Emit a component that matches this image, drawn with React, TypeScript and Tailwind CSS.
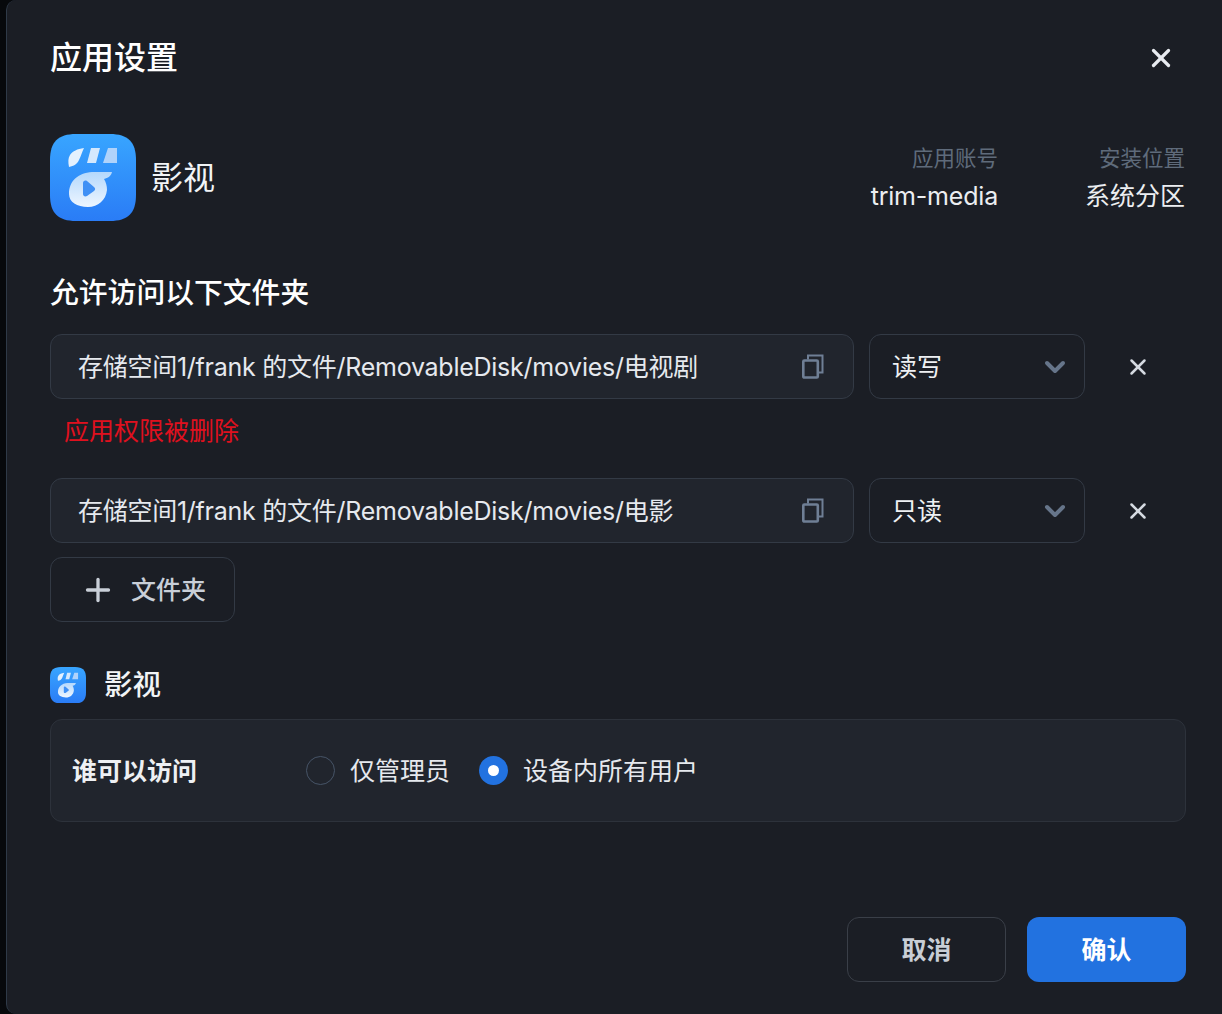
import { ChevronDownIcon, PlusIcon, XIcon } from 'lucide-react';

const FONT = "font-['Inter','Noto_Sans_CJK_SC',sans-serif]";

const FOLDERS = [
	{ path: '存储空间1/frank 的文件/RemovableDisk/movies/电视剧', mode: '读写', error: '应用权限被删除' },
	{ path: '存储空间1/frank 的文件/RemovableDisk/movies/电影', mode: '只读' }
];

function AppIcon({ size, id }: { size: number; id: string }) {
	return (
		<svg width={size} height={(size * 87) / 86} viewBox="0 0 86 87" className="shrink-0">
			<defs>
				<linearGradient id={`${id}-bg`} x1="0" y1="0" x2="0" y2="1">
					<stop offset="0" stopColor="#38a5ff" />
					<stop offset="1" stopColor="#2a7cf6" />
				</linearGradient>
				<linearGradient id={`${id}-fg`} x1="0" y1="0" x2="0" y2="1">
					<stop offset="0" stopColor="#b4d8fc" />
					<stop offset="1" stopColor="#eef6ff" />
				</linearGradient>
			</defs>
			<path
				d="M26 0H60C78 0 86 8 86 26V61C86 79 78 87 60 87H26C8 87 0 79 0 61V26C0 8 8 0 26 0Z"
				fill={`url(#${id}-bg)`}
			/>
			<path d="M19 33C18 28 18 24 20 21C23 17 27 15 34 14C32 18 31 22 29 26C27 30 24 32 19 33Z" fill="#e4f1fe" />
			<path d="M41 14H50L46 29H37Z" fill="#d4e8fd" />
			<path d="M58 14H67V29H53Z" fill="#b0d3fb" />
			<path
				d="M19 60C19 47 28 39 42 38H62C61 42 58 44 54 45C56 48 57 52 57 56C56 66 48 73 38 73C27 73 19 68 19 60Z"
				fill={`url(#${id}-fg)`}
			/>
			<path
				d="M33 49C33 47 35 46 37 47L44 53C45.500 54 45.500 56 44 57L37 62C35 63 33 62 33 60Z"
				fill="#3f90f5"
			/>
		</svg>
	);
}

function CopyIcon() {
	return (
		<svg width="22" height="25" viewBox="0 0 22 25" fill="none" stroke="#6f7f95" strokeWidth="2.600" className="shrink-0">
			<rect x="1.300" y="6.500" width="14.500" height="17" rx="1" />
			<path d="M6 5.500V1.500H20.500V18.500H16.500" strokeWidth="2" />
		</svg>
	);
}

function Radio({ checked, label }: { checked?: boolean; label: string }) {
	return (
		<label className="flex items-center gap-[15px]">
			{checked ? (
				<span className="flex size-[29px] items-center justify-center rounded-full bg-[#2272e0]">
					<span className="size-[11px] rounded-full bg-white" />
				</span>
			) : (
				<span className="size-[29px] rounded-full border border-[#465467]" />
			)}
			<span className="text-[25px] leading-[36px] text-[#e6e9ee]">{label}</span>
		</label>
	);
}

export default function App() {
	return (
		<div className={`h-[1014px] w-[1222px] overflow-hidden bg-[#07090c] pl-[6px] ${FONT}`}>
			<div className="flex h-full flex-col rounded-l-[10px] border-l border-[#2f3a48] bg-[#1b1e25] pr-[36px] pl-[43px]">
				<div className="flex h-[116px] shrink-0 items-center justify-between pr-[10px]">
					<h1 className="text-[32px] leading-[44px] font-medium text-white">应用设置</h1>
					<XIcon className="size-[30px] text-[#e8ebf0]" strokeWidth={2.6} />
				</div>

				<div className="mt-[18px] flex h-[87px] items-center">
					<AppIcon size={86} id="large" />
					<span className="ml-[15px] text-[32px] leading-[44px] text-[#f2f4f6]">影视</span>
					<div className="ml-auto flex gap-[87px] text-right">
						<div className="flex flex-col gap-[1px]">
							<span className="text-[21.500px] leading-[36px] text-[#5f6b7b]">应用账号</span>
							<span className="text-[25px] leading-[38px] tracking-[-0.2px] text-[#eceef1]">trim-media</span>
						</div>
						<div className="flex flex-col gap-[1px] pr-[1px]">
							<span className="text-[21.500px] leading-[36px] text-[#5f6b7b]">安装位置</span>
							<span className="text-[25px] leading-[38px] text-[#eceef1]">系统分区</span>
						</div>
					</div>
				</div>

				<h2 className="mt-[50px] text-[28.800px] leading-[44px] font-medium text-white">
					允许访问以下文件夹
				</h2>

				<div className="mt-[19px] flex flex-col gap-[14px]">
					{FOLDERS.map((folder) => (
						<div key={folder.mode} className="flex flex-col">
							<div className="flex items-center">
								<div className="flex h-[65px] w-[804px] items-center justify-between rounded-[12px] border border-[#333a45] bg-[#21252d] pr-[29px] pl-[27px]">
									<span className="pt-[2px] text-[25px] tracking-[-0.26px] whitespace-nowrap text-[#e6e9ee]">
										{folder.path}
									</span>
									<CopyIcon />
								</div>
								<div className="ml-[15px] flex h-[65px] w-[216px] items-center justify-between rounded-[12px] border border-[#333a45] pr-[13px] pl-[22px]">
									<span className="pt-[2px] text-[25px] text-[#eef0f3]">{folder.mode}</span>
									<ChevronDownIcon className="size-[32px] text-[#66758a]" strokeWidth={3} />
								</div>
								<XIcon className="ml-[40px] size-[26px] text-[#d5dae1]" strokeWidth={2.3} />
							</div>
							{folder.error && (
								<p className="mt-[14px] mb-[15px] ml-[14px] text-[25px] leading-[36px] text-[#e0101e]">
									{folder.error}
								</p>
							)}
						</div>
					))}
				</div>

				<button className="mt-[14px] flex h-[65px] w-[185px] items-center rounded-[12px] border border-[#333a45] pl-[29px]">
					<PlusIcon className="size-[36px] text-[#c9cfd8]" strokeWidth={2.2} />
					<span className="ml-[15px] pt-[2px] text-[25px] font-medium text-[#c9cfd8]">文件夹</span>
				</button>

				<div className="mt-[45px] flex h-[36px] items-center gap-[18px]">
					<AppIcon size={36} id="small" />
					<span className="text-[28.500px] leading-[36px] font-medium text-[#f2f4f6]">影视</span>
				</div>

				<div className="mt-[16px] flex h-[103px] items-center rounded-[12px] border border-[#2d323b] bg-[#21252d] pl-[21px]">
					<span className="w-[234px] pt-[2px] text-[25px] font-bold text-[#eef0f3]">谁可以访问</span>
					<div className="flex gap-[29px]">
						<Radio label="仅管理员" />
						<Radio checked label="设备内所有用户" />
					</div>
				</div>

				<div className="mt-[95px] flex justify-end gap-[21px]">
					<button className="h-[65px] w-[159px] rounded-[12px] border border-[#3a3f48] pt-[2px] text-[25px] font-bold text-[#c9ced6]">
						取消
					</button>
					<button className="h-[65px] w-[159px] rounded-[12px] bg-[#2272e0] pt-[2px] text-[25px] font-bold text-white">
						确认
					</button>
				</div>
			</div>
		</div>
	);
}
